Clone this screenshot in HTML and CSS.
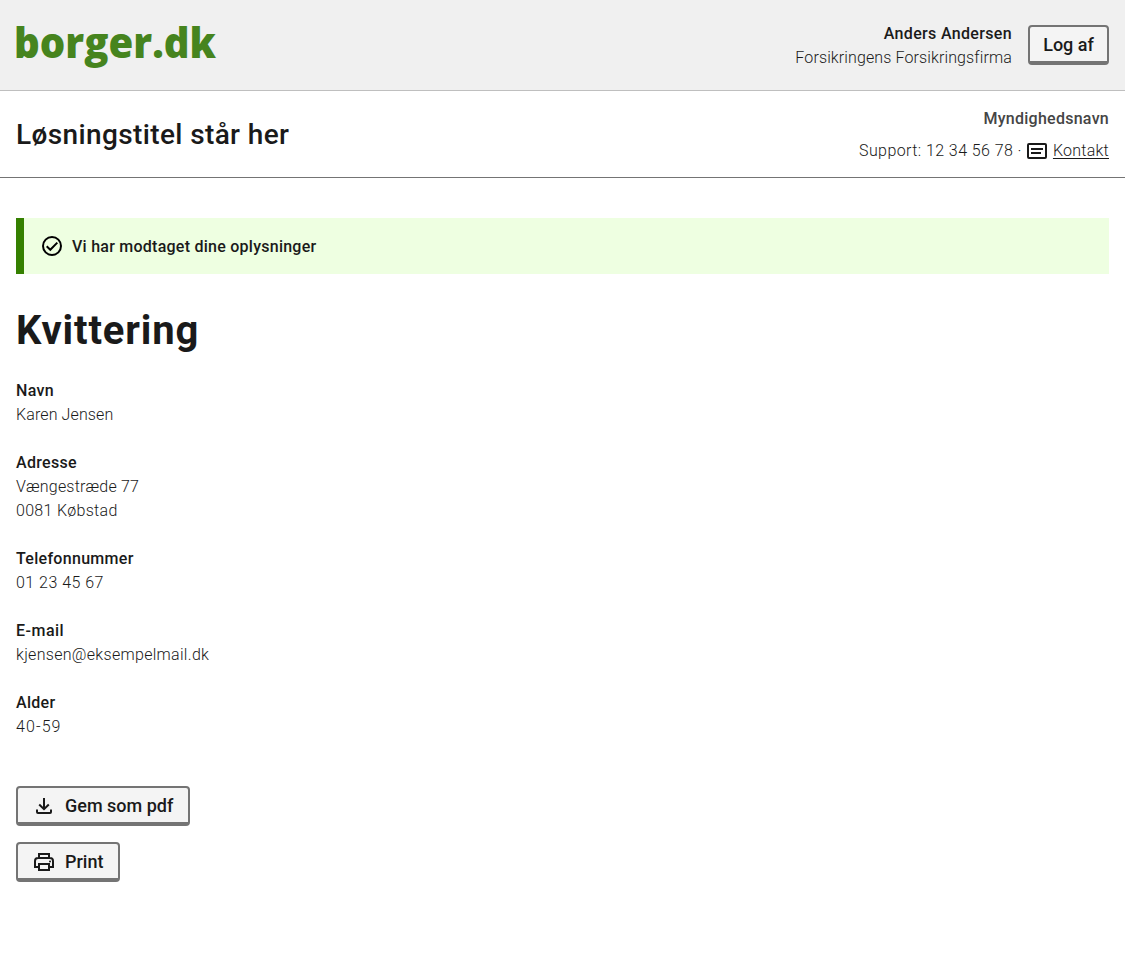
FILE: index.html
```html
<!DOCTYPE html>
<html lang="da">
<head>
<meta charset="utf-8">
<title>Kvittering</title>
<link rel="stylesheet" href="styles.css">
</head>
<body>
<header class="portal">
  <svg class="logo" width="202" height="54" viewBox="0 0 202 54" role="img" aria-label="borger.dk"><text class="logo-text" x="-2" y="40" textLength="202" lengthAdjust="spacingAndGlyphs">borger.dk</text></svg>
  <div class="account">
    <div class="user">
      <strong class="user-name">Anders Andersen</strong>
      <span class="user-company">Forsikringens Forsikringsfirma</span>
    </div>
    <button class="button logout"><span>Log af</span></button>
  </div>
</header>
<section class="solution">
  <div class="solution-title">Løsningstitel står her</div>
  <div class="authority">
    <strong class="authority-name">Myndighedsnavn</strong>
    <div class="support"><span class="support-text">Support: 12 34 56 78 ·</span>
      <svg class="mail-icon" width="20" height="16" viewBox="0 0 20 16"><rect x="1" y="1" width="18" height="14" rx="1"/><path d="M4 6h12M4 10h10"/></svg>
      <a class="contact" href="#">Kontakt</a></div>
  </div>
</section>
<main class="content">
  <div class="alert">
    <svg class="check-icon" width="20" height="20" viewBox="0 0 20 20"><circle cx="10" cy="10" r="9"/><path d="M4.700 10.300l3.600 3.500 7-7.200"/></svg>
    <strong class="alert-text">Vi har modtaget dine oplysninger</strong>
  </div>
  <h1 class="heading">Kvittering</h1>
  <dl class="details">
    <div><dt>Navn</dt><dd class="name">Karen Jensen</dd></div>
    <div><dt>Adresse</dt><dd class="street">Vængestræde 77</dd><dd>0081 Købstad</dd></div>
    <div><dt>Telefonnummer</dt><dd class="phone">01 23 45 67</dd></div>
    <div><dt class="email-label">E-mail</dt><dd>kjensen@eksempelmail.dk</dd></div>
    <div><dt>Alder</dt><dd class="age">40-59</dd></div>
  </dl>
  <div class="actions">
    <button class="button save"><svg class="icon" width="24" height="24" viewBox="0 0 24 24"><path d="M12 4v11M7.200 10.500L12 15.200l4.800-4.700M5 15.500V18q0 1 1 1h12q1 0 1-1v-2.500"/></svg><span>Gem som pdf</span></button>
    <button class="button print"><svg class="icon" width="24" height="24" viewBox="0 0 24 24"><path d="M7 8V4h10v4M7 17H3v-6q0-3 3-3h12q3 0 3 3v6h-4M7 14h10v6H7z"/><circle class="dot" cx="18" cy="11.500" r="1"/></svg><span>Print</span></button>
  </div>
</main>
</body>
</html>
```
FILE: styles.css
```css
* { box-sizing: border-box; }
body { margin: 0; background: #fff; color: #1a1a1a; font: 300 16px/24px Roboto, "Liberation Sans", sans-serif; }
strong, dt { font-weight: 500; }
.portal { display: flex; justify-content: space-between; height: 91px; padding: 18px 16px 0; background: #f0f0f0; border-bottom: 1px solid #bfbfbf; }
.logo { overflow: visible; }
.logo-text { font: 800 43px "Open Sans", sans-serif; fill: #46841e; }
.account { display: flex; align-items: flex-start; gap: 16px; padding-top: 7px; }
.user { display: flex; flex-direction: column; align-items: flex-end; margin-top: -3px; }
.user-name { letter-spacing: 0.34px; }
.user-company { letter-spacing: 0.12px; }
.button { display: flex; align-items: center; justify-content: center; height: 40px; padding: 0; color: #1a1a1a; background: #f4f4f4; border: 2px solid #747474; border-bottom-width: 4px; border-radius: 4px; font: 500 18px/24px Roboto, sans-serif; white-space: nowrap; }
.button span { padding-top: 2px; }
.logout { width: 81px; }
.solution { display: flex; justify-content: space-between; height: 87px; padding: 0 16px; border-bottom: 1px solid #747474; }
.solution-title { padding-top: 26px; font-weight: 500; font-size: 28px; line-height: 36px; letter-spacing: 0.38px; }
.authority { display: flex; flex-direction: column; align-items: flex-end; gap: 8px; padding-top: 16px; }
.authority-name { color: #454545; letter-spacing: 0.26px; }
.support { display: flex; align-items: center; }
.support-text { letter-spacing: 0.42px; }
.mail-icon { margin: -1px 6px 0 5px; fill: none; stroke: #1a1a1a; stroke-width: 2; }
.contact { color: #1a1a1a; letter-spacing: 0.24px; text-underline-offset: 2px; text-decoration-thickness: 1px; }
.content { padding: 40px 16px 0; }
.alert { display: flex; align-items: center; gap: 10px; height: 56px; padding-left: 18px; background: #eeffe1; border-left: 8px solid #358000; }
.alert-text { padding-top: 2px; letter-spacing: 0.25px; }
.check-icon { fill: none; stroke: #000; stroke-width: 2; }
.heading { margin: 32px 0 24px; font-size: 40px; line-height: 49px; font-weight: 700; letter-spacing: 0.85px; }
.details { display: flex; flex-direction: column; gap: 24px; margin: 0; letter-spacing: 0.3px; }
.name { letter-spacing: 0.12px; }
.street { letter-spacing: 0.2px; }
.phone { letter-spacing: 0.48px; }
.email-label { letter-spacing: 0.5px; }
.age { letter-spacing: 1.100px; }
dd { margin: 0; }
.actions { display: flex; flex-direction: column; align-items: flex-start; gap: 16px; margin-top: 47px; }
.save, .print { justify-content: flex-start; gap: 9px; padding-left: 14px; }
.save { width: 174px; }
.print { width: 104px; }
.icon { margin-top: 1px; fill: none; stroke: #1a1a1a; stroke-width: 2; }
.dot { fill: #1a1a1a; stroke: none; }
```
